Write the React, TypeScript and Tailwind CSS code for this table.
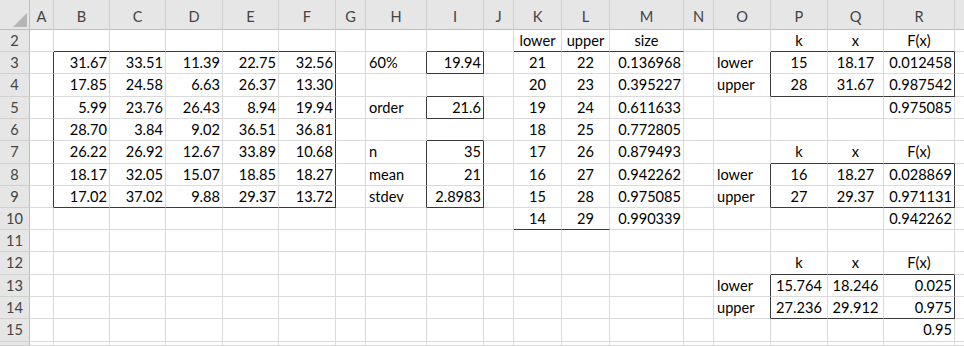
import React from "react";

const COLS = ["A","B","C","D","E","F","G","H","I","J","K","L","M","N","O","P","Q","R"];
const ROWS = [2,3,4,5,6,7,8,9,10,11,12,13,14,15,16];

type Align = "l" | "c" | "r";
const ALIGN: Record<string, Align> = {
  A: "r", B: "r", C: "r", D: "r", E: "r", F: "r", G: "r", H: "l", I: "r", J: "r",
  K: "c", L: "c", M: "r", N: "r", O: "l", P: "c", Q: "c", R: "r",
};

const DATA: Record<string, string> = {
  K2: "lower", L2: "upper", M2: "size", P2: "k", Q2: "x", R2: "F(x)",
  B3: "31.67", C3: "33.51", D3: "11.39", E3: "22.75", F3: "32.56", H3: "60%", I3: "19.94", K3: "21", L3: "22", M3: "0.136968", O3: "lower", P3: "15", Q3: "18.17", R3: "0.012458",
  B4: "17.85", C4: "24.58", D4: "6.63", E4: "26.37", F4: "13.30", K4: "20", L4: "23", M4: "0.395227", O4: "upper", P4: "28", Q4: "31.67", R4: "0.987542",
  B5: "5.99", C5: "23.76", D5: "26.43", E5: "8.94", F5: "19.94", H5: "order", I5: "21.6", K5: "19", L5: "24", M5: "0.611633", R5: "0.975085",
  B6: "28.70", C6: "3.84", D6: "9.02", E6: "36.51", F6: "36.81", K6: "18", L6: "25", M6: "0.772805",
  B7: "26.22", C7: "26.92", D7: "12.67", E7: "33.89", F7: "10.68", H7: "n", I7: "35", K7: "17", L7: "26", M7: "0.879493", P7: "k", Q7: "x", R7: "F(x)",
  B8: "18.17", C8: "32.05", D8: "15.07", E8: "18.85", F8: "18.27", H8: "mean", I8: "21", K8: "16", L8: "27", M8: "0.942262", O8: "lower", P8: "16", Q8: "18.27", R8: "0.028869",
  B9: "17.02", C9: "37.02", D9: "9.88", E9: "29.37", F9: "13.72", H9: "stdev", I9: "2.8983", K9: "15", L9: "28", M9: "0.975085", O9: "upper", P9: "27", Q9: "29.37", R9: "0.971131",
  K10: "14", L10: "29", M10: "0.990339", R10: "0.942262",
  P12: "k", Q12: "x", R12: "F(x)",
  O13: "lower", P13: "15.764", Q13: "18.246", R13: "0.025",
  O14: "upper", P14: "27.236", Q14: "29.912", R14: "0.975",
  R15: "0.95",
};

const CENTER = new Set(["M2", "R2", "R7", "R12"]);

const ci = (c: string) => COLS.indexOf(c) + 1;
const BOXES: [number, number, number, number][] = [
  [ci("B"), 3, ci("F"), 9],
  [ci("I"), 3, ci("I"), 3],
  [ci("I"), 5, ci("I"), 5],
  [ci("I"), 7, ci("I"), 9],
  [ci("P"), 3, ci("R"), 4],
  [ci("P"), 8, ci("R"), 9],
  [ci("P"), 13, ci("R"), 14],
];
const LINES: [number, number, number][] = [
  [ci("K"), ci("M"), 2],
  [ci("K"), ci("L"), 10],
];

function darkBottom(c: number, r: number) {
  for (const [c1, r1, c2, r2] of BOXES) {
    if (c >= c1 && c <= c2 && (r === r2 || r + 1 === r1)) return true;
  }
  for (const [c1, c2, row] of LINES) {
    if (c >= c1 && c <= c2 && r === row) return true;
  }
  return false;
}
function darkRight(c: number, r: number) {
  for (const [c1, r1, c2, r2] of BOXES) {
    if (r >= r1 && r <= r2 && (c === c2 || c + 1 === c1)) return true;
  }
  return false;
}

function Corner() {
  return (
    <div className="bg-[#e6e6e6] border-r border-b border-r-[#bdbdbd] border-b-[#bdbdbd] relative">
      <svg width="30" height="30" className="absolute left-0 top-0">
        <polygon points="13,27 27,13 27,27" fill="#b5b5b5" />
      </svg>
    </div>
  );
}

export default function App() {
  const cells: React.ReactNode[] = [];
  cells.push(<Corner key="corner" />);
  COLS.forEach((c) => {
    cells.push(
      <div
        key={"h" + c}
        className="bg-[#e6e6e6] border-r border-b border-r-[#d0d0d0] border-b-[#bdbdbd] flex items-end justify-center text-[#444444] leading-[22px] pb-[1px]"
      >
        {c}
      </div>
    );
  });
  cells.push(
    <div key="hS" className="bg-[#e6e6e6] border-b border-b-[#bdbdbd]" />
  );

  ROWS.forEach((r) => {
    cells.push(
      <div
        key={"r" + r}
        className="bg-[#e6e6e6] border-r border-b border-r-[#bdbdbd] border-b-[#d0d0d0] flex items-center justify-center text-[#444444] leading-[22px] overflow-hidden"
      >
        {r < 16 ? r : ""}
      </div>
    );
    COLS.forEach((c, i) => {
      const idx = i + 1;
      const key = c + r;
      const v = DATA[key];
      const a = CENTER.has(key) ? "c" : ALIGN[c];
      const db = darkBottom(idx, r);
      const dr = darkRight(idx, r);
      const cls = [
        "bg-white border-r border-b flex items-center whitespace-nowrap leading-[22px] text-black overflow-visible",
        db ? "border-b-[#3a3a3a]" : "border-b-[#dadada]",
        dr ? "border-r-[#3a3a3a]" : "border-r-[#dadada]",
        a === "r" ? "justify-end pr-[2px]" : a === "c" ? "justify-center" : "justify-start pl-[3px]",
      ].join(" ");
      cells.push(
        <div key={key} className={cls}>
          {v ?? ""}
        </div>
      );
    });
    cells.push(
      <div key={"S" + r} className="bg-white border-b border-b-[#dadada]" />
    );
  });

  return (
    <div className="w-[964px] h-[346px] overflow-hidden bg-white font-[Lato,sans-serif] text-[14.6px]">
      <div className="grid grid-cols-[30px_24px_56px_56px_57px_56px_57px_30px_61px_57px_30px_48px_48px_74px_30px_57px_57px_56px_71px_9px] grid-rows-[30px_22px_22px_23px_22px_22px_23px_22px_22px_22px_22px_23px_22px_22px_23px_4px]">
        {cells}
      </div>
    </div>
  );
}
